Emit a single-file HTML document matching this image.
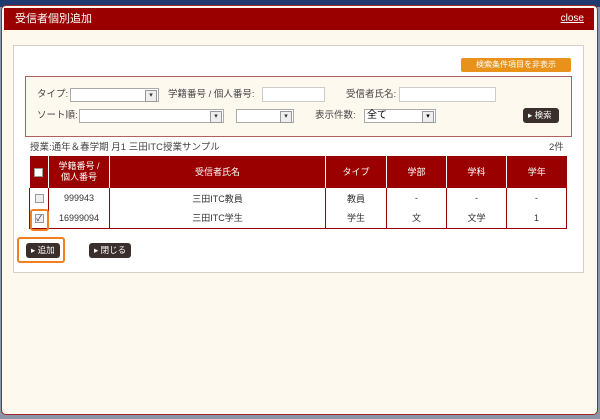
<!DOCTYPE html>
<html><head><meta charset="utf-8"><style>
*{box-sizing:border-box;margin:0;padding:0}
body{width:600px;height:419px;background:#8a96a8;position:relative;overflow:hidden;font-family:"Liberation Sans","Noto Sans CJK JP",sans-serif;font-size:9px;color:#333}
.abs{position:absolute}
.top{left:0;top:0;width:600px;height:7px;background:#1e3a6e}
.dlg{left:1px;top:5px;width:597px;height:410px;background:#fef9ee;border:1px solid #a0282a;border-radius:5px}
.hdr{left:4px;top:8px;width:590px;height:22px;background:#9b0000;color:#fff;font-size:11px;line-height:22px;padding-left:11px}
.hdr span{position:absolute;right:10px;top:0;text-decoration:underline;font-size:10px}
.panel{left:13px;top:45px;width:571px;height:228px;background:#fff;border:1px solid #d4d0c8}
.ob{left:461px;top:58px;width:110px;height:14px;background:#e8921c;color:#fff;border-radius:2px;text-align:center;line-height:14px;font-size:8px}
.sb{left:25px;top:76px;width:547px;height:61px;background:#fef9ee;border:1px solid #b06060}
.lbl{font-size:9.5px;color:#444;line-height:12px}
.inp{background:#fff;border:1px solid #ccc;height:15px}
.sel{background:#fff;border:1px solid #aaa;height:14px}
.sel:after{content:"▾";position:absolute;right:1px;top:1px;width:10px;height:10px;border:1px solid #999;background:#eee;font-size:7px;line-height:10px;text-align:center}
.btn{background:#3a2f2c;color:#fff;border-radius:3px;line-height:15px;height:15px;font-size:8.5px;padding-left:5px}
table{position:absolute;left:29px;top:156px;width:538px;border-collapse:collapse;font-size:9px}
th{background:#9b0000;color:#fff;border-right:1px solid #fff;font-weight:normal;height:32px;text-align:center;line-height:11px}
td{border-left:1px solid #9b0000;border-right:1px solid #9b0000;height:20px;text-align:center}
tr.last td{border-bottom:1px solid #9b0000}
.cb{display:inline-block;width:9px;height:9px;border:1px solid #999;background:#eee;vertical-align:middle}
.hl{border:2px solid #f08020;border-radius:3px}
</style></head><body>
<div class="abs top"></div>
<div class="abs dlg"></div>
<div class="abs hdr">受信者個別追加<span>close</span></div>
<div class="abs panel"></div>
<div class="abs ob">検索条件項目を非表示</div>
<div class="abs sb"></div>
<div class="abs lbl" style="left:37px;top:89px">タイプ:</div>
<div class="abs sel" style="left:70px;top:88px;width:89px"></div>
<div class="abs lbl" style="left:168px;top:89px">学籍番号 / 個人番号:</div>
<div class="abs inp" style="left:262px;top:87px;width:63px"></div>
<div class="abs lbl" style="left:346px;top:89px">受信者氏名:</div>
<div class="abs inp" style="left:399px;top:87px;width:97px"></div>
<div class="abs lbl" style="left:37px;top:110px">ソート順:</div>
<div class="abs sel" style="left:79px;top:109px;width:145px"></div>
<div class="abs sel" style="left:236px;top:109px;width:58px"></div>
<div class="abs lbl" style="left:315px;top:110px">表示件数:</div>
<div class="abs sel" style="left:364px;top:109px;width:72px;padding-left:2px;font-size:10px;line-height:12px;color:#000">全て</div>
<div class="abs btn" style="left:523px;top:108px;width:36px">▸ 検索</div>
<div class="abs lbl" style="left:30px;top:142px">授業:通年＆春学期 月1 三田ITC授業サンプル</div>
<div class="abs lbl" style="left:549px;top:142px">2件</div>
<table>
<tr><th style="width:19px"><span class="cb" style="background:#fff"></span></th><th style="width:61px">学籍番号 /<br>個人番号</th><th style="width:216px">受信者氏名</th><th style="width:61px">タイプ</th><th style="width:60px">学部</th><th style="width:60px">学科</th><th style="border-right:none">学年</th></tr>
<tr><td><span class="cb"></span></td><td>999943</td><td>三田ITC教員</td><td>教員</td><td>-</td><td>-</td><td>-</td></tr>
<tr class="last"><td><span class="cb" style="font-size:8px;line-height:7px;color:#226">✓</span></td><td>16999094</td><td>三田ITC学生</td><td>学生</td><td>文</td><td>文学</td><td>1</td></tr>
</table>
<div class="abs hl" style="left:30px;top:209px;width:19px;height:22px"></div>
<div class="abs hl" style="left:17px;top:237px;width:48px;height:26px"></div>
<div class="abs btn" style="left:26px;top:243px;width:34px">▸ 追加</div>
<div class="abs btn" style="left:89px;top:243px;width:42px">▸ 閉じる</div>
</body></html>
